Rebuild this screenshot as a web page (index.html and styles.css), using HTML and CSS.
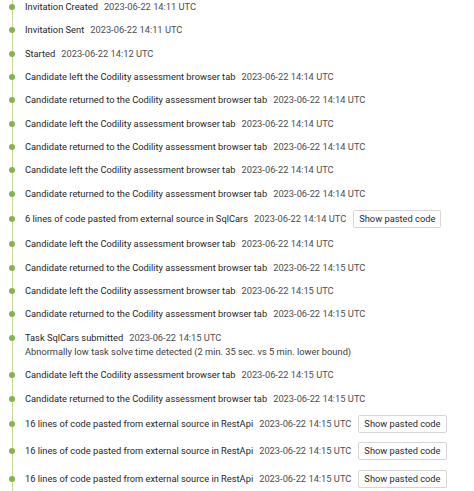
FILE: index.html
```html
<!DOCTYPE html>
<html>
<head>
<meta charset="utf-8">
<link rel="stylesheet" href="styles.css">
</head>
<body>
<ul class="timeline">
  <li class="event"><div class="line"><span class="title">Invitation Created</span><span class="date">2023-06-22 14:11 UTC</span></div></li>
  <li class="event"><div class="line"><span class="title">Invitation Sent</span><span class="date">2023-06-22 14:11 UTC</span></div></li>
  <li class="event"><div class="line"><span class="title">Started</span><span class="date">2023-06-22 14:12 UTC</span></div></li>
  <li class="event"><div class="line"><span class="title">Candidate left the Codility assessment browser tab</span><span class="date">2023-06-22 14:14 UTC</span></div></li>
  <li class="event"><div class="line"><span class="title">Candidate returned to the Codility assessment browser tab</span><span class="date">2023-06-22 14:14 UTC</span></div></li>
  <li class="event"><div class="line"><span class="title">Candidate left the Codility assessment browser tab</span><span class="date">2023-06-22 14:14 UTC</span></div></li>
  <li class="event"><div class="line"><span class="title">Candidate returned to the Codility assessment browser tab</span><span class="date">2023-06-22 14:14 UTC</span></div></li>
  <li class="event"><div class="line"><span class="title">Candidate left the Codility assessment browser tab</span><span class="date">2023-06-22 14:14 UTC</span></div></li>
  <li class="event"><div class="line"><span class="title">Candidate returned to the Codility assessment browser tab</span><span class="date">2023-06-22 14:14 UTC</span></div></li>
  <li class="event has-btn"><div class="line"><span class="title">6 lines of code pasted from external source in SqlCars</span><span class="date">2023-06-22 14:14 UTC</span><button class="btn">Show pasted code</button></div></li>
  <li class="event"><div class="line"><span class="title">Candidate left the Codility assessment browser tab</span><span class="date">2023-06-22 14:14 UTC</span></div></li>
  <li class="event"><div class="line"><span class="title">Candidate returned to the Codility assessment browser tab</span><span class="date">2023-06-22 14:15 UTC</span></div></li>
  <li class="event"><div class="line"><span class="title">Candidate left the Codility assessment browser tab</span><span class="date">2023-06-22 14:15 UTC</span></div></li>
  <li class="event"><div class="line"><span class="title">Candidate returned to the Codility assessment browser tab</span><span class="date">2023-06-22 14:15 UTC</span></div></li>
  <li class="event"><div class="line"><span class="title">Task SqlCars submitted</span><span class="date">2023-06-22 14:15 UTC</span></div><div class="note">Abnormally low task solve time detected (2 min. 35 sec. vs 5 min. lower bound)</div></li>
  <li class="event"><div class="line"><span class="title">Candidate left the Codility assessment browser tab</span><span class="date">2023-06-22 14:15 UTC</span></div></li>
  <li class="event"><div class="line"><span class="title">Candidate returned to the Codility assessment browser tab</span><span class="date">2023-06-22 14:15 UTC</span></div></li>
  <li class="event has-btn"><div class="line"><span class="title">16 lines of code pasted from external source in RestApi</span><span class="date">2023-06-22 14:15 UTC</span><button class="btn">Show pasted code</button></div></li>
  <li class="event has-btn"><div class="line"><span class="title">16 lines of code pasted from external source in RestApi</span><span class="date">2023-06-22 14:15 UTC</span><button class="btn">Show pasted code</button></div></li>
  <li class="event has-btn"><div class="line"><span class="title">16 lines of code pasted from external source in RestApi</span><span class="date">2023-06-22 14:15 UTC</span><button class="btn">Show pasted code</button></div></li>
</ul>
</body>
</html>
```
FILE: styles.css
```css
html, body {
  margin: 0;
  padding: 0;
  background: #ffffff;
}
body {
  font-family: Roboto, "Liberation Sans", sans-serif;
  font-size: 9.3px;
  color: #333333;
  overflow: hidden;
}
.timeline {
  list-style: none;
  margin: 0;
  padding: 0 0 0 25px;
  position: relative;
  display: flex;
  flex-direction: column;
  gap: 9.35px;
  min-height: 491px;
  box-sizing: border-box;
}
.timeline::before {
  content: "";
  position: absolute;
  left: 12px;
  top: 0;
  bottom: 0;
  width: 1px;
  background: #c3d99b;
}
.event {
  position: relative;
  display: flex;
  flex-direction: column;
}
.event::before {
  content: "";
  position: absolute;
  left: -16px;
  top: 4px;
  width: 6px;
  height: 6px;
  border-radius: 50%;
  background: #84b352;
}
.has-btn::before {
  top: 6px;
}
.line {
  display: flex;
  align-items: center;
  gap: 6px;
  line-height: 14px;
  white-space: nowrap;
}
.title {
  color: #262626;
}
.date {
  color: #4d4d4d;
}
.note {
  line-height: 14px;
  color: #3d3d3d;
  white-space: nowrap;
}
.btn {
  font-family: inherit;
  font-size: 9.3px;
  color: #2b2b2b;
  background: #ffffff;
  border: 1px solid #d6d6d6;
  border-radius: 2px;
  height: 18px;
  padding: 0 5px;
  line-height: 16px;
  margin-left: 1px;
}
```
